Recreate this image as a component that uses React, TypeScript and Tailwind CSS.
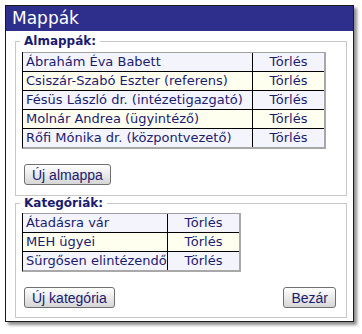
const SUBFOLDERS = [
  "Ábrahám Éva Babett",
  "Csiszár-Szabó Eszter (referens)",
  "Fésüs László dr. (intézetigazgató)",
  "Molnár Andrea (ügyintéző)",
  "Rőfi Mónika dr. (központvezető)",
];

const CATEGORIES = ["Átadásra vár", "MEH ügyei", "Sürgősen elintézendő"];

function ListTable({ rows, nameWidth }: { rows: string[]; nameWidth: string }) {
  return (
    <div className="flex w-fit flex-col border-l border-l-black border-r-2 border-r-[#a8a8a8] border-b-2 border-b-[#a8a8a8] text-[13px] text-[#1b1b70]">
      {rows.map((name, i) => (
        <div
          key={name}
          className={`flex h-[19px] border-t ${i === 0 ? "border-t-[#a0a0a0]" : "border-t-black"} ${i % 2 ? "bg-[#fffff0]" : "bg-[#f4f4fc]"}`}
        >
          <div className={`${nameWidth} border-r border-black pl-[3px] leading-[18px] whitespace-nowrap`}>{name}</div>
          <div className="w-[71px] text-center leading-[18px]">Törlés</div>
        </div>
      ))}
    </div>
  );
}

function Button({ children }: { children: string }) {
  return (
    <button className="h-[21px] px-[7px] rounded-[3px] border border-[#707070] bg-linear-to-b from-white to-[#d6d6d6] font-['Liberation_Sans',sans-serif] text-[14px] leading-none text-[#1b1b70]">
      {children}
    </button>
  );
}

export default function App() {
  return (
    <div className="min-h-screen bg-white p-[5px] font-['DejaVu_Sans',sans-serif]">
      <div className="w-[349px] border border-[#1a1a1a] bg-white shadow-[3px_3px_3px_rgba(0,0,0,0.45)]">
        <div className="h-[25px] bg-[#2e2e8c] pl-[6px] text-[17px] leading-[25px] text-white">Mappák</div>
        <div className="pl-[9px] pr-[6px] pb-[3px]">
          <fieldset className="mt-[3px] border border-[#c8c8c8]">
            <legend className="ml-[4px] px-[4px] text-[12px] font-bold leading-[14px] text-[#1b1b6e]">Almappák:</legend>
            <div className="pl-[6px] pt-[4px] pb-[10px]">
              <ListTable rows={SUBFOLDERS} nameWidth="w-[230px]" />
              <div className="mt-[15px] pl-[2px] flex">
                <Button>Új almappa</Button>
              </div>
            </div>
          </fieldset>
          <fieldset className="border border-[#c8c8c8]">
            <legend className="ml-[4px] px-[4px] text-[12px] font-bold leading-[14px] text-[#1b1b6e]">Kategóriák:</legend>
            <div className="pl-[6px] pt-[3px] pb-[9px]">
              <ListTable rows={CATEGORIES} nameWidth="w-[145px]" />
              <div className="mt-[15px] pl-[2px] pr-[10px] flex justify-between">
                <Button>Új kategória</Button>
                <Button>Bezár</Button>
              </div>
            </div>
          </fieldset>
        </div>
      </div>
    </div>
  );
}
